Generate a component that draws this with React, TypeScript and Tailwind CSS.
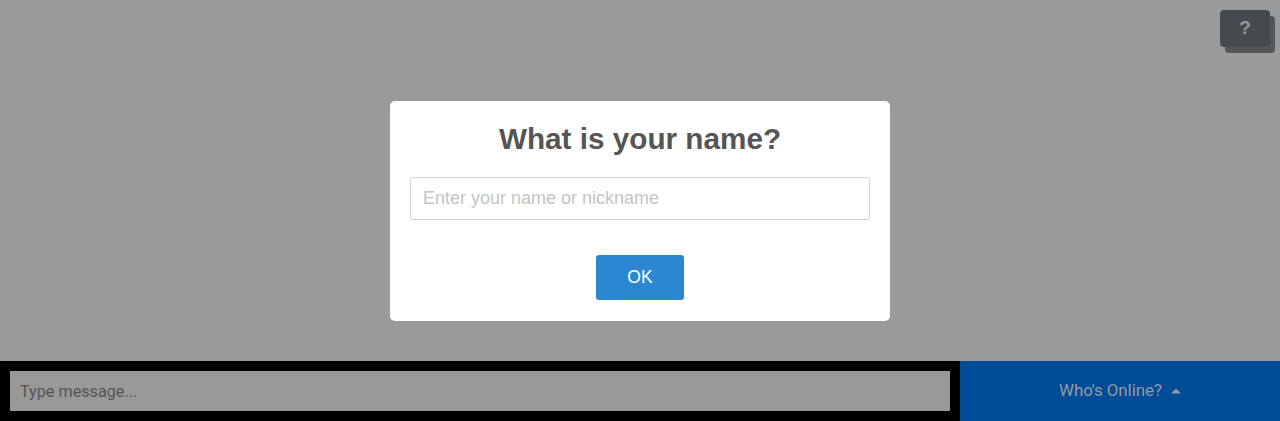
import React from 'react';

const App: React.FC = () => {
  return (
    <div className="relative h-screen w-full overflow-hidden bg-[#9a9a9a] flex flex-col" style={{ fontFamily: '"Liberation Sans", Arial, sans-serif' }}>
      <div className="flex-1"></div>

      {/* bottom chat bar */}
      <div className="flex h-[60px] w-full">
        <div className="w-[960px] bg-black p-[10px]">
          <input
            className="w-full h-[40px] bg-[#999999] px-[10px] text-[16.2px] text-[#555] placeholder-[#555] outline-none"
            style={{ fontFamily: 'Roboto, sans-serif' }}
            placeholder="Type message..."
          />
        </div>
        <div className="flex-1 bg-[#004c99] flex items-center justify-center gap-[9px] text-[16.8px] text-[#9a9a9a]" style={{ fontFamily: 'Roboto, sans-serif' }}>
          <span>Who's Online?</span>
          <svg width="10" height="6" viewBox="0 0 10 6">
            <path d="M0 5.5 L5 0.5 L10 5.5 Z" fill="#9a9a9a" />
          </svg>
        </div>
      </div>

      {/* help button */}
      <div className="absolute top-[10px] right-[10px]">
        <div className="absolute top-[6px] left-[5px] w-[50px] h-[37px] rounded-[4px] bg-[#555657]"></div>
        <button className="relative w-[50px] h-[37px] rounded-[4px] bg-[#454a4f] text-[#999] font-bold text-[19px] flex items-center justify-center">
          ?
        </button>
      </div>

      {/* name modal */}
      <div className="absolute inset-0 flex items-center justify-center">
        <div className="w-[500px] h-[220px] bg-white rounded-[5px] px-[20px] pt-[18px] flex flex-col items-center">
          <h2 className="text-[29.7px] font-bold text-[#555] leading-[40px]">What is your name?</h2>
          <input
            className="mt-[18px] w-full h-[43px] border border-[#d4d4d4] rounded-[3px] px-[12px] text-[18px] text-[#555] placeholder-[#c4c4c4] outline-none"
            placeholder="Enter your name or nickname"
          />
          <button className="mt-[35px] w-[88px] h-[45px] rounded-[3px] bg-[#2c87d2] text-white text-[17.5px]">
            OK
          </button>
        </div>
      </div>
    </div>
  );
};

export default App;
